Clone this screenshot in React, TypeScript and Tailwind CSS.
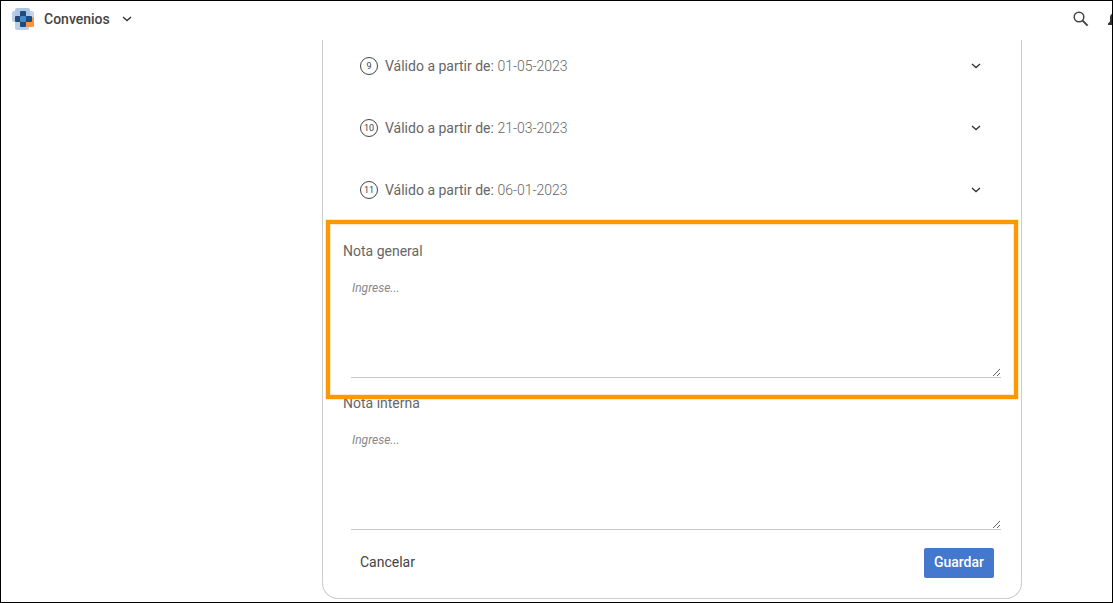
import { useState } from "react";

const agreements = [
  { n: 9, date: "01-05-2023" },
  { n: 10, date: "21-03-2023" },
  { n: 11, date: "06-01-2023" },
];

function Chevron() {
  return (
    <svg width="10" height="6" viewBox="0 0 10 6" fill="none" stroke="#333" strokeWidth="1.3" aria-hidden="true">
      <path d="M1 1 L5 4.6 L9 1" />
    </svg>
  );
}

function Logo() {
  return (
    <svg width="22" height="22" viewBox="0 0 22 22" aria-hidden="true">
      <rect x="0" y="3" width="12" height="11" rx="2" fill="#b9cee8" />
      <rect x="8" y="3" width="14" height="10" rx="2" fill="#c3d5ec" />
      <rect x="3" y="0" width="15" height="11" rx="2" fill="#adc6e3" />
      <rect x="3" y="11" width="14" height="11" rx="2" fill="#b9cee8" />
      <rect x="12" y="9" width="10" height="10" rx="1.5" fill="#fb9440" />
      <path d="M9 3h4a1 1 0 0 1 1 1v4h5a1 1 0 0 1 1 1v4a1 1 0 0 1-1 1h-5v4a1 1 0 0 1-1 1H9a1 1 0 0 1-1-1v-4H4a1 1 0 0 1-1-1V9a1 1 0 0 1 1-1h4V4a1 1 0 0 1 1-1z" fill="#1f4a80" />
      <rect x="8" y="8" width="6" height="6" rx="1" fill="#4a86d0" />
    </svg>
  );
}

function Note({ id, label }: { id: string; label: string }) {
  return (
    <div className="flex flex-col gap-4">
      <label htmlFor={id} className="leading-5 text-[#666]">{label}</label>
      <textarea
        id={id}
        placeholder="Ingrese..."
        className="ml-2 block h-[101px] resize-y border-b border-[#c8c8c8] bg-transparent pl-px text-xs leading-[22px] italic outline-none placeholder:text-[#888]"
      />
    </div>
  );
}

export default function App() {
  const [open, setOpen] = useState<number | null>(null);
  return (
    <div className="flex min-h-screen flex-col border border-black bg-white font-[Roboto,'Liberation_Sans',sans-serif] text-sm text-[#444]">
      <header className="flex h-[39px] items-center justify-between overflow-hidden pb-[3px] pl-[11px]">
        <button type="button" className="flex items-center gap-2.5 font-medium text-[#444]">
          <Logo />
          <span className="pr-0.5">Convenios</span>
          <Chevron />
        </button>
        <div className="-mr-3 flex items-center gap-[18px]">
          <button type="button" aria-label="Buscar">
            <svg width="16" height="16" viewBox="0 0 16 16" fill="none" stroke="#444" strokeWidth="1.5" aria-hidden="true">
              <circle cx="6" cy="6" r="4.8" />
              <path d="M9.6 9.6 L14.6 14.6" strokeWidth="2" />
            </svg>
          </button>
          <button type="button" aria-label="Notificaciones">
            <svg width="17" height="16" viewBox="0 0 17 16" fill="#333" aria-hidden="true">
              <path d="M8.5 0a1.2 1.2 0 0 1 1.2 1.2v.5C12 2.300 14 4 14 6.500v4l2 2v1.500H1v-1.500l2-2v-4C3 4 5 2.300 7.300 1.700v-.5A1.200 1.200 0 0 1 8.500 0z" />
            </svg>
          </button>
        </div>
      </header>

      <main className="flex grow pr-[90px] pb-[3px] pl-[321px]">
        <section className="grow rounded-b-2xl border border-t-0 border-[#ccc] px-5 pt-4 pb-5">
          <ul className="flex flex-col gap-[42px] pr-5 pl-4">
            {agreements.map((a) => (
              <li key={a.n}>
                <button
                  type="button"
                  aria-expanded={open === a.n}
                  onClick={() => setOpen(open === a.n ? null : a.n)}
                  className="flex h-5 w-full items-center gap-[7px] pl-px text-left text-[#666]"
                >
                  <span className="flex size-[18px] items-center justify-center rounded-full border border-[#444] text-[9px] leading-4 text-[#444]">
                    {a.n}
                  </span>
                  <span className="grow">
                    Válido a partir de: <span className="font-light">{a.date}</span>
                  </span>
                  <Chevron />
                </button>
              </li>
            ))}
          </ul>

          <form className="mt-[41px]" onSubmit={(e) => e.preventDefault()}>
            <div className="flex flex-col gap-[15px]">
              <div className="relative">
                <Note id="nota-general" label="Nota general" />
                <div className="pointer-events-none absolute -inset-x-[17px] -inset-y-[21px] z-10 border-4 border-[#ff9800] ring-1 inset-ring-1 ring-[#ff9800]/20 inset-ring-[#ff9800]/20" />
              </div>
              <Note id="nota-interna" label="Nota interna" />
            </div>
            <div className="mt-[18px] flex items-center justify-between pr-[7px] pl-[17px]">
              <button type="button" className="pb-0.5">Cancelar</button>
              <button type="submit" className="h-[30px] rounded-xs bg-[#4478ce] px-2.5 pb-0.5 font-medium text-white">
                Guardar
              </button>
            </div>
          </form>
        </section>
      </main>
    </div>
  );
}
